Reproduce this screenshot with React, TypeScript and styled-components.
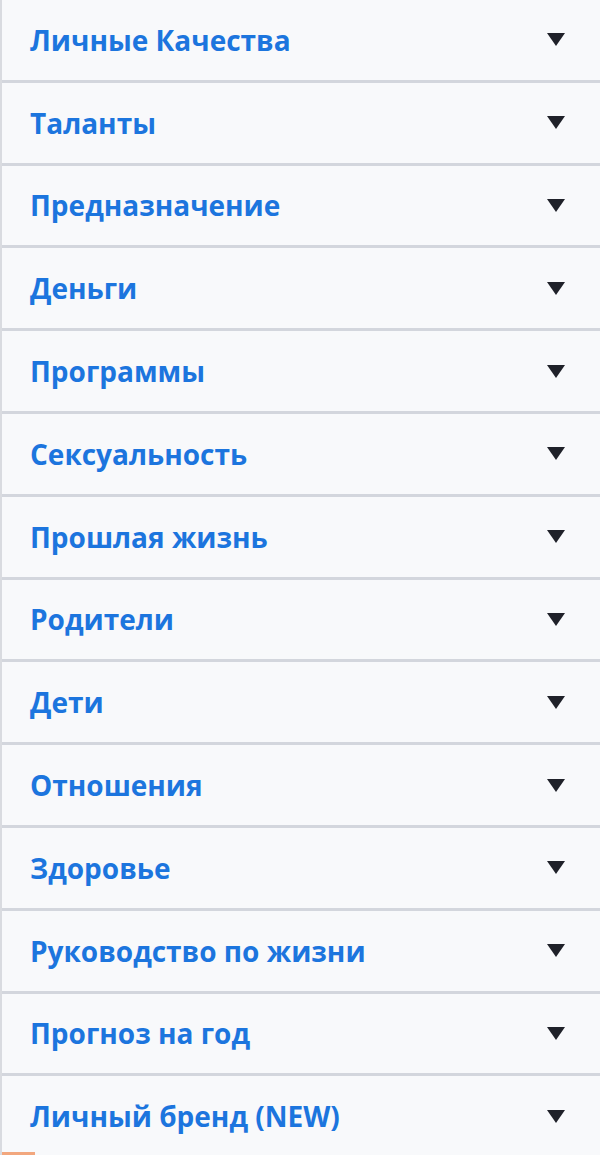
import styled, { createGlobalStyle } from "styled-components"

const GlobalStyle = createGlobalStyle`
  html, body {
    margin: 0;
    padding: 0;
    background: #f8f9fb;
  }
`

const List = styled.div`
  display: flex;
  flex-direction: column;
  width: 600px;
  height: 1155px;
  overflow: hidden;
  border-left: 2px solid #d9dbe0;
  box-sizing: border-box;
  position: relative;
  background: #f8f9fb;
`

const Row = styled.div`
  flex: 0 0 auto;
  height: 82.8px;
  box-sizing: border-box;
  border-bottom: 3px solid #d3d6dd;
  display: flex;
  align-items: center;
  justify-content: space-between;
  padding: 0 35px 0 28px;
`

const Title = styled.span`
  font-family: "Open Sans", "Liberation Sans", sans-serif;
  font-weight: 700;
  font-size: 28px;
  color: #1c75de;
`

const Caret = styled.span`
  width: 0;
  height: 0;
  border-left: 9.5px solid transparent;
  border-right: 9.5px solid transparent;
  border-top: 13px solid #1f2129;
`

const Accent = styled.div`
  position: absolute;
  left: 0;
  bottom: 0;
  width: 33px;
  height: 3px;
  background: #f2a77e;
`

const items = [
  "Личные Качества",
  "Таланты",
  "Предназначение",
  "Деньги",
  "Программы",
  "Сексуальность",
  "Прошлая жизнь",
  "Родители",
  "Дети",
  "Отношения",
  "Здоровье",
  "Руководство по жизни",
  "Прогноз на год",
  "Личный бренд (NEW)",
]

export default function App() {
  return (
    <>
      <GlobalStyle />
      <List>
        {items.map((name) => (
          <Row key={name}>
            <Title>{name}</Title>
            <Caret />
          </Row>
        ))}
        <Accent />
      </List>
    </>
  )
}
